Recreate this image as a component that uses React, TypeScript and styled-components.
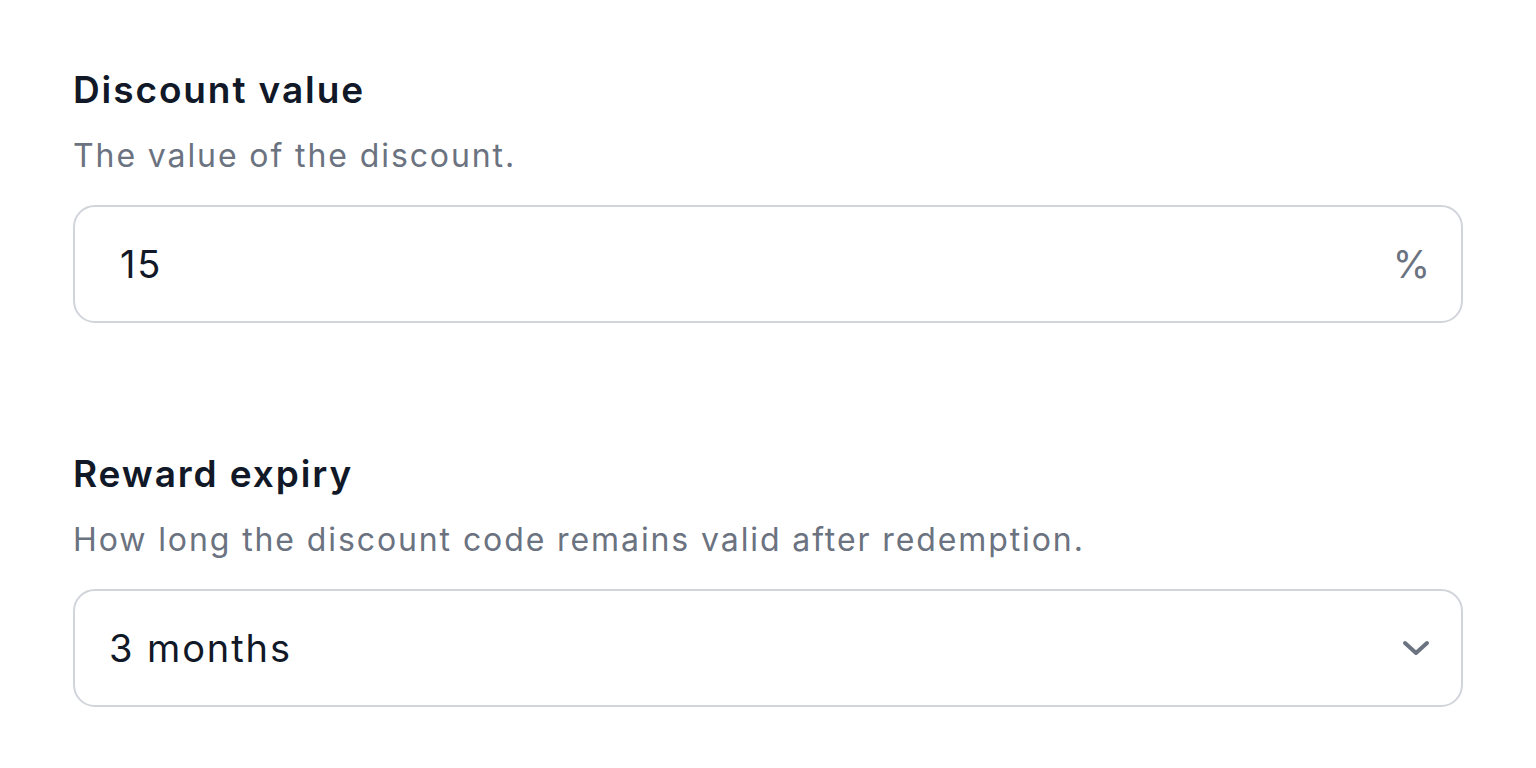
import React from "react";
import styled, { createGlobalStyle } from "styled-components";

const GlobalStyle = createGlobalStyle`
  html, body { margin: 0; padding: 0; background: #ffffff; }
  body { font-family: Inter, "Noto Sans", "Liberation Sans", sans-serif; -webkit-font-smoothing: antialiased; }
  * { box-sizing: border-box; }
`;

const Page = styled.div`
  display: flex;
  flex-direction: column;
  gap: 127px;
  padding: 66px 73px;
`;

const Field = styled.div`
  display: flex;
  flex-direction: column;
`;

const Label = styled.label`
  font-size: 37px;
  line-height: 48px;
  font-weight: 600;
  letter-spacing: 1.9px;
  color: #111827;
`;

const Description = styled.p`
  margin: 22px 0 29px;
  font-size: 32px;
  line-height: 40px;
  letter-spacing: 1.9px;
  color: #6b7280;
`;

const Control = styled.div<{ $padLeft: number }>`
  display: flex;
  align-items: center;
  justify-content: space-between;
  height: 118px;
  border: 2.5px solid #d1d5db;
  border-radius: 22px;
  background: #ffffff;
  padding: 0 31px 0 ${(p) => p.$padLeft}px;
`;

const Value = styled.span`
  font-size: 38px;
  line-height: 48px;
  letter-spacing: 1.9px;
  color: #111827;
`;

const Suffix = styled.span`
  font-size: 38px;
  line-height: 48px;
  color: #6b7280;
`;

const Chevron = () => (
  <svg width="28" height="16" viewBox="0 0 28 16" fill="none">
    <path d="M3 3l11 10 11-10" stroke="#6b7280" strokeWidth="4" strokeLinecap="round" strokeLinejoin="round" />
  </svg>
);

export default function App() {
  return (
    <>
      <GlobalStyle />
      <Page>
        <Field>
          <Label>Discount value</Label>
          <Description>The value of the discount.</Description>
          <Control $padLeft={45}>
            <Value>15</Value>
            <Suffix>%</Suffix>
          </Control>
        </Field>
        <Field>
          <Label>Reward expiry</Label>
          <Description>How long the discount code remains valid after redemption.</Description>
          <Control $padLeft={34}>
            <Value>3 months</Value>
            <Chevron />
          </Control>
        </Field>
      </Page>
    </>
  );
}
